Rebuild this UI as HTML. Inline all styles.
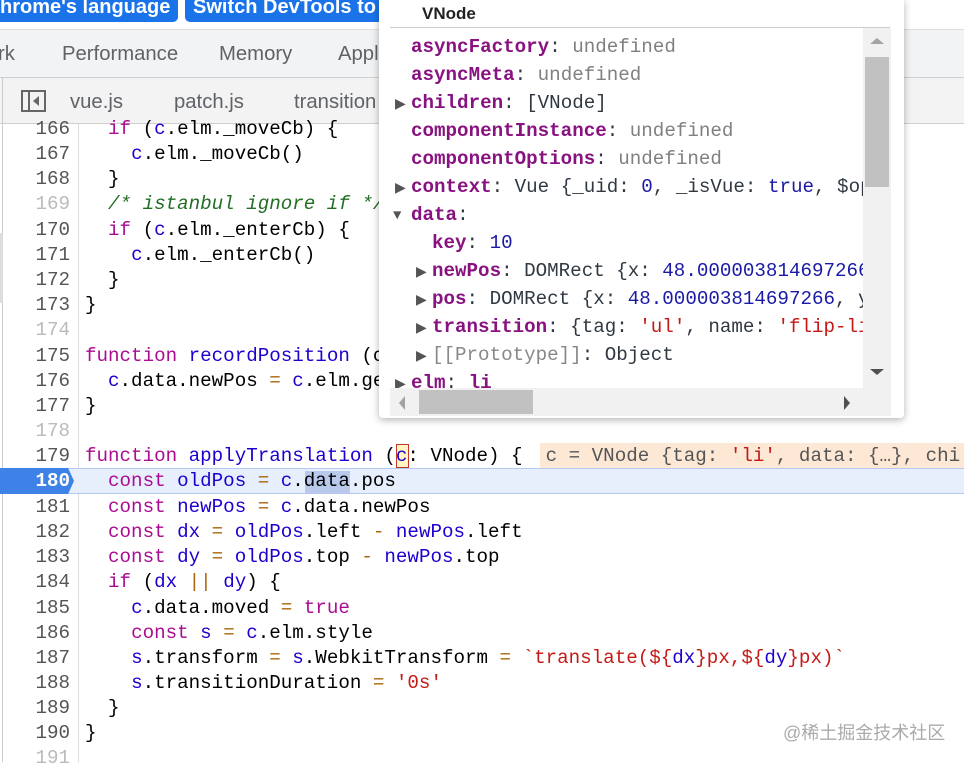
<!DOCTYPE html>
<html><head><meta charset="utf-8"><style>
*{margin:0;padding:0;box-sizing:border-box}
body{width:964px;height:762px;overflow:hidden;background:#fff;position:relative;font-family:"Liberation Sans",sans-serif}
.btn{position:absolute;top:-8px;height:30px;background:#1a73e8;color:#fff;font-size:20px;font-weight:bold;border-radius:5px;padding:4px 8px;white-space:nowrap;overflow:hidden}
.bar{position:absolute;left:0;width:964px;background:#f1f3f4}
.tab{position:absolute;font-size:20.3px;color:#5f6368;white-space:nowrap}
.m{font-family:"Liberation Mono",monospace;font-size:19.2px;white-space:pre}
.ln{position:absolute;left:0;width:70px;text-align:right;color:#555}
.cd{position:absolute;left:85px}
.k{color:#aa0d91}.v{color:#1c00cf}.c{color:#236e25;font-style:italic}.s{color:#c41a16}.o{color:#a8660c}.n{color:#1a1aa6}
.pk{color:#881280;font-weight:bold}.u{color:#808080}.pn{color:#1a1aa6}
.pop{position:absolute;left:379px;top:0;width:525px;height:418px;background:#fff;box-shadow:0 2px 8px rgba(0,0,0,.3);border-radius:0 0 4px 4px}
.pr{position:absolute;color:#303942}
.tri{position:absolute;font-size:14px;color:#555}
#cw{position:absolute;left:0;top:1px;width:964px;height:762px}
</style></head><body>
<div class="btn" style="left:-8px;width:186px">hrome's language</div>
<div class="btn" style="left:185px;width:210px">Switch DevTools to</div>
<div class="bar" style="top:29px;height:49px;border-top:1px solid #ddd;border-bottom:1px solid #d0d0d0"></div>
<div class="tab" style="left:-2px;top:43px">rk</div>
<div class="tab" style="left:62px;top:43px">Performance</div>
<div class="tab" style="left:219px;top:43px">Memory</div>
<div class="tab" style="left:338px;top:43px">Appl</div>
<div class="bar" style="top:78px;height:46px;background:#f3f3f3;border-bottom:1px solid #d0d0d0"></div>
<div style="position:absolute;left:0;top:78px;width:3px;height:46px;border-right:1px solid #ccc"></div>
<div style="position:absolute;left:21px;top:90px;width:25px;height:22px;border:2px solid #666"><div style="position:absolute;left:5px;top:0;width:2px;height:18px;background:#666"></div><div style="position:absolute;left:10px;top:4px;border:5px solid transparent;border-right:6px solid #666;border-left:0"></div></div>
<div class="tab" style="left:70px;top:91px">vue.js</div>
<div class="tab" style="left:174px;top:91px">patch.js</div>
<div class="tab" style="left:294px;top:91px">transition</div>
<div style="position:absolute;left:2px;top:124px;width:1px;height:638px;background:#ccc"></div>
<div style="position:absolute;left:78px;top:124px;width:1px;height:638px;background:#ddd"></div>
<div style="position:absolute;left:0;top:233px;width:3px;height:70px;background:#ddd"></div>
<div style="position:absolute;left:0;top:468px;width:964px;height:26px;background:#e8effc;border-top:1px solid #b6c8f2;border-bottom:1px solid #b6c8f2"></div>
<div style="position:absolute;left:0;top:468px;width:74px;height:26px;background:#3e82e8;clip-path:polygon(0 0,92% 0,100% 50%,92% 100%,0 100%)"></div>
<div style="position:absolute;left:540px;top:443px;width:424px;height:25px;background:#fde8d6"></div>
<div style="position:absolute;left:305px;top:471px;width:45px;height:22px;background:#b9c9ec"></div>
<div style="position:absolute;left:396px;top:444px;width:13px;height:24px;background:#fff6c4;border:1px solid #c0392b"></div>
<div class="m" id="cw">
<div class="ln" style="top:117px">166</div><div class="cd" style="top:117px">  <span class="k">if</span> (<span class="v">c</span>.elm._moveCb) {</div>
<div class="ln" style="top:142px">167</div><div class="cd" style="top:142px">    <span class="v">c</span>.elm._moveCb()</div>
<div class="ln" style="top:167px">168</div><div class="cd" style="top:167px">  }</div>
<div class="ln" style="top:192px;color:#bbb">169</div><div class="cd" style="top:192px">  <span class="c">/* istanbul ignore if */</span></div>
<div class="ln" style="top:218px">170</div><div class="cd" style="top:218px">  <span class="k">if</span> (<span class="v">c</span>.elm._enterCb) {</div>
<div class="ln" style="top:243px">171</div><div class="cd" style="top:243px">    <span class="v">c</span>.elm._enterCb()</div>
<div class="ln" style="top:268px">172</div><div class="cd" style="top:268px">  }</div>
<div class="ln" style="top:293px">173</div><div class="cd" style="top:293px">}</div>
<div class="ln" style="top:318px;color:#bbb">174</div>
<div class="ln" style="top:344px">175</div><div class="cd" style="top:344px"><span class="k">function</span> <span class="v">recordPosition</span> (c</div>
<div class="ln" style="top:369px">176</div><div class="cd" style="top:369px">  <span class="v">c</span>.data.newPos <span class="o">=</span> <span class="v">c</span>.elm.ge</div>
<div class="ln" style="top:394px">177</div><div class="cd" style="top:394px">}</div>
<div class="ln" style="top:419px;color:#bbb">178</div>
<div class="ln" style="top:444px">179</div><div class="cd" style="top:444px"><span class="k">function</span> <span class="v">applyTranslation</span> (<span class="v">c</span>: VNode) {  <span style="color:#555">c = VNode {tag: <span class="s">'li'</span>, data: {…}, chi</span></div>
<div class="ln" style="top:469px;color:#fff;font-weight:bold">180</div><div class="cd" style="top:469px">  <span class="k">const</span> <span class="v">oldPos</span> <span class="o">=</span> <span class="v">c</span>.data.pos</div>
<div class="ln" style="top:495px">181</div><div class="cd" style="top:495px">  <span class="k">const</span> <span class="v">newPos</span> <span class="o">=</span> <span class="v">c</span>.data.newPos</div>
<div class="ln" style="top:520px">182</div><div class="cd" style="top:520px">  <span class="k">const</span> <span class="v">dx</span> <span class="o">=</span> <span class="v">oldPos</span>.left <span class="o">-</span> <span class="v">newPos</span>.left</div>
<div class="ln" style="top:545px">183</div><div class="cd" style="top:545px">  <span class="k">const</span> <span class="v">dy</span> <span class="o">=</span> <span class="v">oldPos</span>.top <span class="o">-</span> <span class="v">newPos</span>.top</div>
<div class="ln" style="top:570px">184</div><div class="cd" style="top:570px">  <span class="k">if</span> (<span class="v">dx</span> <span class="o">||</span> <span class="v">dy</span>) {</div>
<div class="ln" style="top:596px">185</div><div class="cd" style="top:596px">    <span class="v">c</span>.data.moved <span class="o">=</span> <span class="k">true</span></div>
<div class="ln" style="top:621px">186</div><div class="cd" style="top:621px">    <span class="k">const</span> <span class="v">s</span> <span class="o">=</span> <span class="v">c</span>.elm.style</div>
<div class="ln" style="top:646px">187</div><div class="cd" style="top:646px">    <span class="v">s</span>.transform <span class="o">=</span> <span class="v">s</span>.WebkitTransform <span class="o">=</span> <span class="s">`translate(${</span><span class="v">dx</span><span class="s">}px,${</span><span class="v">dy</span><span class="s">}px)`</span></div>
<div class="ln" style="top:671px">188</div><div class="cd" style="top:671px">    <span class="v">s</span>.transitionDuration <span class="o">=</span> <span class="s">'0s'</span></div>
<div class="ln" style="top:696px">189</div><div class="cd" style="top:696px">  }</div>
<div class="ln" style="top:721px">190</div><div class="cd" style="top:721px">}</div>
<div class="ln" style="top:746px;color:#bbb">191</div>
</div>
<div style="position:absolute;left:783px;top:719px;font-family:'Liberation Sans','Noto Sans CJK SC',sans-serif;font-size:18px;color:#aaa">@稀土掘金技术社区</div>

<div class="pop">
<div style="position:absolute;left:43px;top:4px;font-size:17px;font-weight:bold;color:#222">VNode</div>
<div style="position:absolute;left:11px;top:27px;width:500px;height:1px;background:#ccc"></div>
<div style="position:absolute;left:11px;top:28px;width:473px;height:360px;overflow:hidden" class="m">
<div class="pr" style="left:21px;top:8px"><span class="pk">asyncFactory</span>: <span class="u">undefined</span></div>
<div class="pr" style="left:21px;top:36px"><span class="pk">asyncMeta</span>: <span class="u">undefined</span></div>
<div class="tri" style="left:5px;top:68px">▶</div><div class="pr" style="left:21px;top:64px"><span class="pk">children</span>: [VNode]</div>
<div class="pr" style="left:21px;top:92px"><span class="pk">componentInstance</span>: <span class="u">undefined</span></div>
<div class="pr" style="left:21px;top:120px"><span class="pk">componentOptions</span>: <span class="u">undefined</span></div>
<div class="tri" style="left:5px;top:152px">▶</div><div class="pr" style="left:21px;top:148px"><span class="pk">context</span>: Vue {_uid: <span class="pn">0</span>, _isVue: <span class="pn">true</span>, $op</div>
<div class="tri" style="left:3px;top:180px">▼</div><div class="pr" style="left:21px;top:176px"><span class="pk">data</span>:</div>
<div class="pr" style="left:42px;top:204px"><span class="pk">key</span>: <span class="pn">10</span></div>
<div class="tri" style="left:26px;top:236px">▶</div><div class="pr" style="left:42px;top:232px"><span class="pk">newPos</span>: DOMRect {x: <span class="pn">48.000003814697266</span></div>
<div class="tri" style="left:26px;top:264px">▶</div><div class="pr" style="left:42px;top:260px"><span class="pk">pos</span>: DOMRect {x: <span class="pn">48.000003814697266</span>, y</div>
<div class="tri" style="left:26px;top:292px">▶</div><div class="pr" style="left:42px;top:288px"><span class="pk">transition</span>: {tag: <span class="s">'ul'</span>, name: <span class="s">'flip-li</span></div>
<div class="tri" style="left:26px;top:320px">▶</div><div class="pr" style="left:42px;top:316px"><span style="color:#888">[[Prototype]]</span>: Object</div>
<div class="tri" style="left:5px;top:348px">▶</div><div class="pr" style="left:21px;top:344px"><span class="pk">elm</span>: <span class="pk">li</span></div>
</div>
<div style="position:absolute;left:484px;top:28px;width:28px;height:360px;background:#f1f1f1"></div>
<div style="position:absolute;left:486px;top:57px;width:24px;height:130px;background:#c1c1c1"></div>
<div style="position:absolute;left:491px;top:38px;border:7px solid transparent;border-bottom:6px solid #a3a3a3;border-top:0"></div>
<div style="position:absolute;left:491px;top:369px;border:7px solid transparent;border-top:6px solid #505050;border-bottom:0"></div>
<div style="position:absolute;left:11px;top:388px;width:501px;height:28px;background:#f1f1f1"></div>
<div style="position:absolute;left:40px;top:390px;width:114px;height:24px;background:#c1c1c1"></div>
<div style="position:absolute;left:20px;top:396px;border:7px solid transparent;border-right:6px solid #a3a3a3;border-left:0"></div>
<div style="position:absolute;left:465px;top:396px;border:7px solid transparent;border-left:6px solid #505050;border-right:0"></div>
</div>
</body></html>
